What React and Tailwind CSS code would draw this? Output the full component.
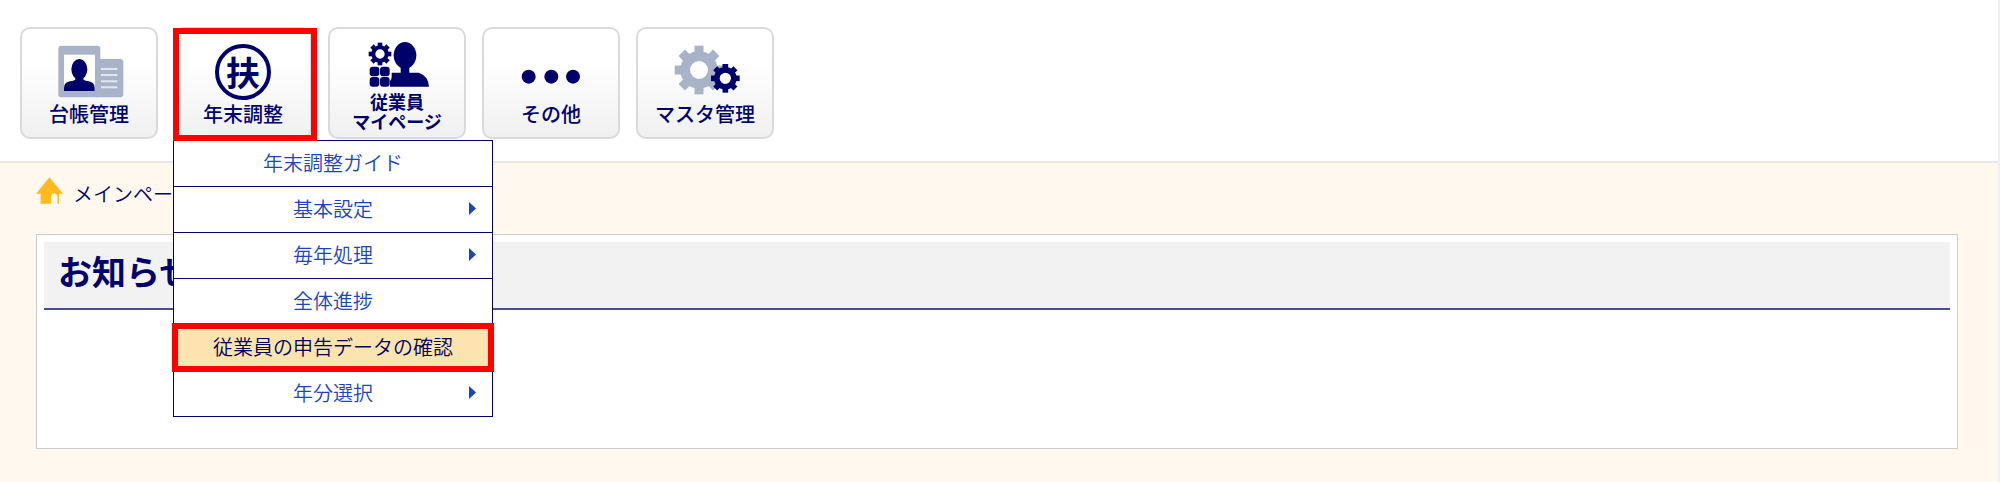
import React, { useState } from 'react';

const Gear = ({ cx, cy, body, outer, hole, tooth, color }) => {
  const mid = (body + hole) / 2;
  return (
    <g>
      <circle cx={cx} cy={cy} r={mid} fill="none" stroke={color} strokeWidth={body - hole} />
      {[0, 45, 90, 135, 180, 225, 270, 315].map((angle) => (
        <rect
          key={angle}
          x={cx - tooth / 2}
          y={cy - outer}
          width={tooth}
          height={outer - body + 6}
          fill={color}
          transform={`rotate(${angle} ${cx} ${cy})`}
        />
      ))}
    </g>
  );
};

const LedgerIcon = () => (
  <svg viewBox="102 69 330 210" className="h-[70px] w-[110px]" aria-hidden="true">
    <rect x="175" y="107" width="126" height="155" rx="9" fill="#a9b3c7" />
    <rect x="280" y="147" width="90" height="115" rx="9" fill="#a9b3c7" />
    <rect x="192" y="134" width="93" height="109" fill="#fff" />
    <ellipse cx="238" cy="178" rx="24" ry="31" fill="#00006b" />
    <path d="M192 243v-10q1-17 18-19 14-1 16-6v-14h24v14q3 5 16 6 17 2 18 19v10z" fill="#00006b" />
    <path d="M303 177h49M303 195h49M303 214h49M303 232h49" stroke="#e1e6ee" strokeWidth="6" />
  </svg>
);

const AdjustmentIcon = () => (
  <span className="flex h-[70px] items-center justify-center">
    <span className="mt-2 flex h-14 w-14 items-center justify-center rounded-full border-4 border-[#00006b] text-[34px] leading-8 font-bold">
      扶
    </span>
  </span>
);

const MyPageIcon = () => (
  <svg viewBox="96 69 330 210" className="h-[70px] w-[110px]" aria-hidden="true">
    <Gear cx={210} cy={132} body={26} outer={34} hole={14} tooth={14} color="#00006b" />
    <rect x="179" y="170" width="29" height="29" rx="9" fill="#00006b" />
    <rect x="210" y="170" width="29" height="29" rx="9" fill="#00006b" />
    <rect x="179" y="201" width="29" height="29" rx="9" fill="#00006b" />
    <rect x="210" y="201" width="29" height="29" rx="9" fill="#00006b" />
    <ellipse cx="285" cy="136" rx="34" ry="40" fill="#00006b" />
    <path d="M272 165h26v23h28q28 8 31 42H240v-17q5-5 5-11v-14h27z" fill="#00006b" />
  </svg>
);

const OtherIcon = () => (
  <svg viewBox="558 69 330 210" className="h-[70px] w-[110px]" aria-hidden="true">
    <circle cx="656" cy="200" r="21" fill="#00006b" />
    <circle cx="724" cy="200" r="21" fill="#00006b" />
    <circle cx="789" cy="200" r="21" fill="#00006b" />
  </svg>
);

const MasterIcon = () => (
  <svg viewBox="150 69 330 210" className="h-[70px] w-[110px]" aria-hidden="true">
    <Gear cx={297} cy={180} body={56} outer={73} hole={27} tooth={27} color="#a9b3c7" />
    <Gear cx={376} cy={205} body={34} outer={43} hole={17} tooth={17} color="#00006b" />
  </svg>
);

const HomeIcon = () => (
  <svg viewBox="108 78 82 81" className="h-[27px] w-[27px] shrink-0" aria-hidden="true">
    <path d="M149 78l41 50h-12v31h-5v-24q-3-8-10-8t-9 8v24h-32v-31h-14z" fill="#ffba1f" />
  </svg>
);

const navItems = [
  { id: 'ledger', label: '台帳管理', Icon: LedgerIcon },
  { id: 'adjustment', label: '年末調整', Icon: AdjustmentIcon },
  { id: 'mypage', label: '従業員', label2: 'マイページ', Icon: MyPageIcon },
  { id: 'other', label: 'その他', Icon: OtherIcon },
  { id: 'master', label: 'マスタ管理', Icon: MasterIcon },
];

const menuItems = [
  { label: '年末調整ガイド' },
  { label: '基本設定', sub: true },
  { label: '毎年処理', sub: true },
  { label: '全体進捗' },
  { label: '従業員の申告データの確認', selected: true },
  { label: '年分選択', sub: true },
];

const DropdownMenu = () => (
  <ul className="absolute -left-px top-[113px] z-10 w-80 border border-[#00006b] bg-white">
    {menuItems.map((item, index) => (
      <li key={item.label} className={index > 0 ? 'border-t border-[#00006b]' : ''}>
        <a
          href="#"
          className={
            item.selected
              ? 'relative flex h-[45px] items-center justify-center bg-[#fce4b0] pb-0.5 text-xl font-[350] text-[#00005a] outline-6 -outline-offset-4 outline-[#ff0000]'
              : 'relative flex h-[45px] items-center justify-center pb-1 text-xl font-[350] text-[#1c45bd] last:pb-0.5 hover:bg-[#fce4b0]'
          }
        >
          {item.label}
          {item.sub && (
            <svg viewBox="0 0 7 13" className="absolute right-4 h-[13px] w-[7px]" aria-hidden="true">
              <path d="M0 0l7 6.500-7 6.500z" fill="#1c45bd" />
            </svg>
          )}
        </a>
      </li>
    ))}
  </ul>
);

const NavButton = ({ item, open, onClick }) => {
  const { Icon } = item;
  return (
    <button
      type="button"
      onClick={onClick}
      aria-expanded={open}
      className="flex h-28 w-[138px] cursor-pointer flex-col items-center rounded-[10px] border-2 border-[#dadada] bg-linear-to-b from-white from-30% to-[#f0f0f0] pt-1 text-[#00006b]"
    >
      <Icon />
      {item.label2 ? (
        <span className="-mt-3 text-lg leading-5 font-bold">
          {item.label}
          <br />
          {item.label2}
        </span>
      ) : (
        <span className="text-xl leading-[22px] font-medium">{item.label}</span>
      )}
    </button>
  );
};

const App = () => {
  const [openMenu, setOpenMenu] = useState('adjustment');

  return (
    <div className="min-h-screen border-r-2 border-[#f0f0f0] bg-[#fff8ee] font-['Noto_Sans_CJK_JP',sans-serif] text-[#00006b]">
      <header className="border-b-2 border-[#e8e8e8] bg-white px-5 pt-[27px] pb-[22px]">
        <nav className="flex gap-4">
          {navItems.map((item) => (
            <div key={item.id} className="relative">
              <NavButton item={item} open={openMenu === item.id} onClick={() => setOpenMenu(item.id)} />
              {item.id === 'adjustment' && openMenu === 'adjustment' && (
                <>
                  <DropdownMenu />
                  {/* Frame around the opened button */}
                  <span className="pointer-events-none absolute top-px -left-px z-20 h-[113px] w-36 border-6 border-[#ff0000]" />
                </>
              )}
            </div>
          ))}
        </nav>
      </header>

      <main className="pr-10 pb-8 pl-9">
        <div className="flex items-end gap-[10px] pt-[14px] pb-[30px]">
          <HomeIcon />
          <a href="#" className="text-xl leading-5 font-[350]">メインページ</a>
        </div>

        <section className="border border-[#cccccc] bg-white px-[7px] pt-[7px] pb-[138px]">
          <h1 className="border-b-2 border-[#4b4b96] bg-[#f2f2f2] bg-clip-padding px-[14px] pt-2 pb-4 text-[34px] leading-[42px] font-bold">
            お知らせ
          </h1>
        </section>
      </main>
    </div>
  );
};

export default App;
